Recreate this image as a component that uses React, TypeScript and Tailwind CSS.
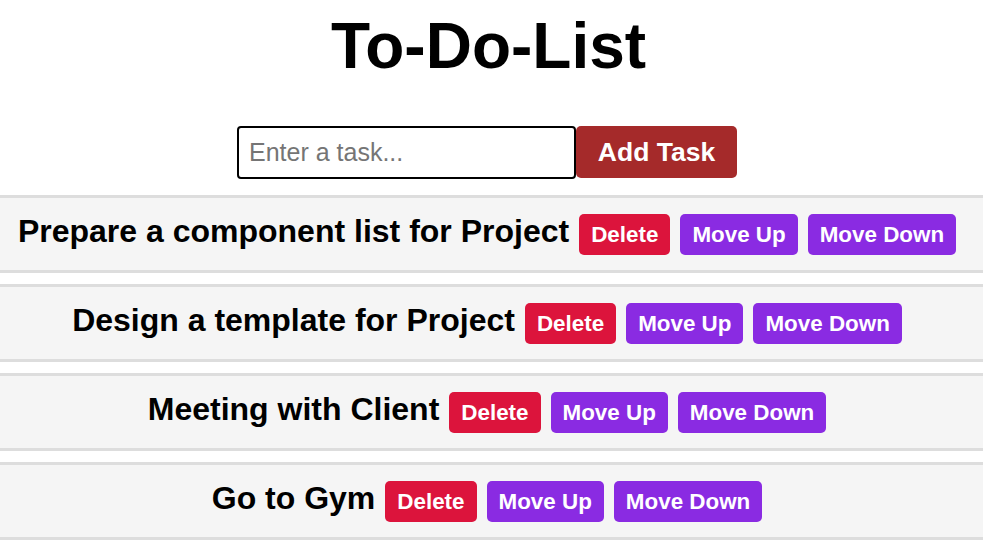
import { useState } from 'react';

const initialTasks = [
  'Prepare a component list for Project',
  'Design a template for Project',
  'Meeting with Client',
  'Go to Gym',
];

export default function App() {
  const [tasks, setTasks] = useState(initialTasks);
  const [text, setText] = useState('');

  const addTask = () => {
    if (!text.trim()) return;
    setTasks([...tasks, text.trim()]);
    setText('');
  };

  const move = (i: number, dir: number) => {
    const j = i + dir;
    if (j < 0 || j >= tasks.length) return;
    const next = [...tasks];
    [next[i], next[j]] = [next[j], next[i]];
    setTasks(next);
  };

  return (
    <div className="min-h-screen bg-white font-['Liberation_Sans',Arial,sans-serif] text-black">
      <h1 className="pt-[9px] pr-[6px] text-center text-[64px] font-bold leading-[74px]">To-Do-List</h1>

      {/* Input row */}
      <div className="mt-[43px] flex items-start justify-center pr-[9px]">
        <input
          value={text}
          onChange={(e) => setText(e.target.value)}
          placeholder="Enter a task..."
          className="h-[53px] w-[339px] rounded-[4px] border-2 border-black px-[10px] text-[25px] leading-[29px] outline-none placeholder:text-[#757575]"
        />
        <button
          onClick={addTask}
          className="h-[52px] w-[161px] rounded-[5px] bg-[#a52a2a] text-[26.5px] font-bold leading-[30px] text-white"
        >
          Add Task
        </button>
      </div>

      {/* Task list */}
      <ol className="mt-4 flex flex-col gap-[11px]">
        {tasks.map((task, i) => (
          <li
            key={task + i}
            className="flex h-[78px] items-center justify-center border-y-[3px] border-[#dddddd] bg-[#f5f5f5] pr-[9px]"
          >
            <div className="flex items-baseline gap-[10px]">
              <span className="text-[32px] font-bold leading-[37px]">{task}</span>
              <button
                onClick={() => setTasks(tasks.filter((_, k) => k !== i))}
                className="rounded-[5px] bg-[#dc143c] px-3 py-2 text-[22.4px] font-bold leading-[25px] text-white"
              >
                Delete
              </button>
              <button
                onClick={() => move(i, -1)}
                className="rounded-[5px] bg-[#8a2be2] px-3 py-2 text-[22.4px] font-bold leading-[25px] text-white"
              >
                Move Up
              </button>
              <button
                onClick={() => move(i, 1)}
                className="rounded-[5px] bg-[#8a2be2] px-3 py-2 text-[22.4px] font-bold leading-[25px] text-white"
              >
                Move Down
              </button>
            </div>
          </li>
        ))}
      </ol>
    </div>
  );
}
